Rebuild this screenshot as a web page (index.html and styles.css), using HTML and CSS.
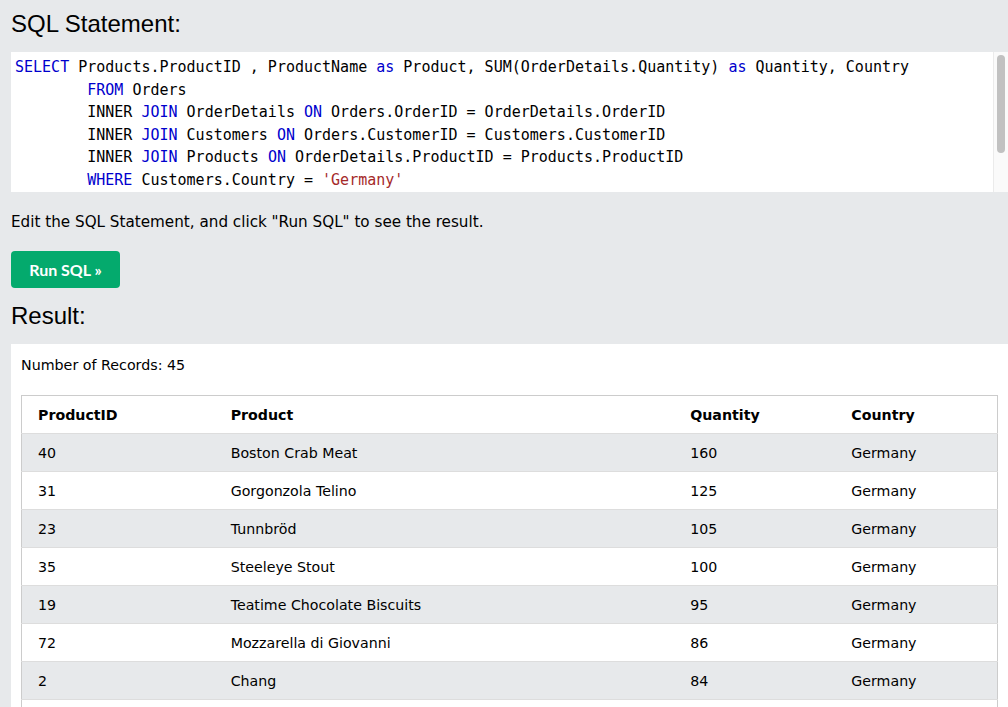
FILE: index.html
```html
<!DOCTYPE html>
<html>
<head>
<meta charset="utf-8">
<link rel="stylesheet" href="styles.css">
</head>
<body>
<h2 class="title">SQL Statement:</h2>
<div class="editor">
  <div class="code"><div class="line"><span class="kw">SELECT</span> Products.ProductID , ProductName <span class="kw">as</span> Product, SUM(OrderDetails.Quantity) <span class="kw">as</span> Quantity, Country</div><div class="line">        <span class="kw">FROM</span> Orders</div><div class="line">        INNER <span class="kw">JOIN</span> OrderDetails <span class="kw">ON</span> Orders.OrderID = OrderDetails.OrderID</div><div class="line">        INNER <span class="kw">JOIN</span> Customers <span class="kw">ON</span> Orders.CustomerID = Customers.CustomerID</div><div class="line">        INNER <span class="kw">JOIN</span> Products <span class="kw">ON</span> OrderDetails.ProductID = Products.ProductID</div><div class="line">        <span class="kw">WHERE</span> Customers.Country = <span class="str">'Germany'</span></div></div>
  <div class="scrollbar"><div class="thumb"></div></div>
</div>
<p class="hint">Edit the SQL Statement, and click "Run SQL" to see the result.</p>
<button class="run">Run SQL »</button>
<h2 class="title result-title">Result:</h2>
<div class="result">
  <div class="count">Number of Records: 45</div>
  <table class="grid">
    <colgroup><col class="c1"><col class="c2"><col class="c3"><col class="c4"></colgroup>
    <tr><th>ProductID</th><th>Product</th><th>Quantity</th><th>Country</th></tr>
    <tr><td>40</td><td>Boston Crab Meat</td><td>160</td><td>Germany</td></tr>
    <tr><td>31</td><td>Gorgonzola Telino</td><td>125</td><td>Germany</td></tr>
    <tr><td>23</td><td>Tunnbröd</td><td>105</td><td>Germany</td></tr>
    <tr><td>35</td><td>Steeleye Stout</td><td>100</td><td>Germany</td></tr>
    <tr><td>19</td><td>Teatime Chocolate Biscuits</td><td>95</td><td>Germany</td></tr>
    <tr><td>72</td><td>Mozzarella di Giovanni</td><td>86</td><td>Germany</td></tr>
    <tr><td>2</td><td>Chang</td><td>84</td><td>Germany</td></tr>
    <tr class="spacer"><td></td><td></td><td></td><td></td></tr>
  </table>
</div>
</body>
</html>
```
FILE: styles.css
```css
html, body {
  margin: 0;
  background: #e7e9eb;
}
body {
  padding: 10px 0 0 11px;
  font-family: "DejaVu Sans", Verdana, sans-serif;
  color: #000;
  overflow: hidden;
}
.title {
  margin: 0 0 14px 0;
  font-family: "Liberation Sans", Arial, sans-serif;
  font-weight: normal;
  font-size: 24px;
  line-height: 28px;
}
.editor {
  display: flex;
  background: #fff;
  height: 140px;
  overflow: hidden;
}
.code {
  flex: 1;
  padding: 4px 0 0 4px;
  font-family: "DejaVu Sans Mono", Menlo, monospace;
  font-size: 15px;
  line-height: 22.5px;
  white-space: pre;
  color: #000;
  overflow: hidden;
}
.kw { color: #0000cd; }
.str { color: #a52a2a; }
.scrollbar {
  width: 15px;
  background: #fafafa;
  border-left: 1px solid #ebebeb;
  padding: 3px 3px 0 3px;
  box-sizing: border-box;
}
.thumb {
  width: 8px;
  height: 98px;
  border-radius: 4px;
  background: #c1c1c1;
}
.hint {
  margin: 19px 0 18px 0;
  font-size: 15.2px;
  line-height: 22px;
}
.run {
  display: block;
  width: 109px;
  height: 37px;
  border: none;
  border-radius: 4px;
  background: #04aa6d;
  color: #fff;
  font-family: Lato, "Open Sans", sans-serif;
  font-weight: bold;
  font-size: 16px;
  padding: 0;
}
.result-title {
  margin-top: 14px;
}
.result {
  background: #fff;
  padding: 10px 10px 0 10px;
}
.count {
  font-size: 14.25px;
  line-height: 22px;
  margin-bottom: 19px;
}
.grid {
  width: 100%;
  border-collapse: collapse;
  border: 1px solid #ccc;
  font-size: 14.2px;
  table-layout: fixed;
}
.c1 { width: 193px; }
.c2 { width: 459px; }
.c3 { width: 161px; }
.c4 { width: 162px; }
.grid th, .grid td {
  text-align: left;
  padding: 9px 16px 7px 16px;
  line-height: 21px;
  border-bottom: 1px solid #ddd;
  white-space: nowrap;
}
.grid th {
  font-weight: bold;
}
.grid tr:nth-child(even) {
  background: #e7e9eb;
}
.grid .spacer td {
  height: 21px;
}
```
